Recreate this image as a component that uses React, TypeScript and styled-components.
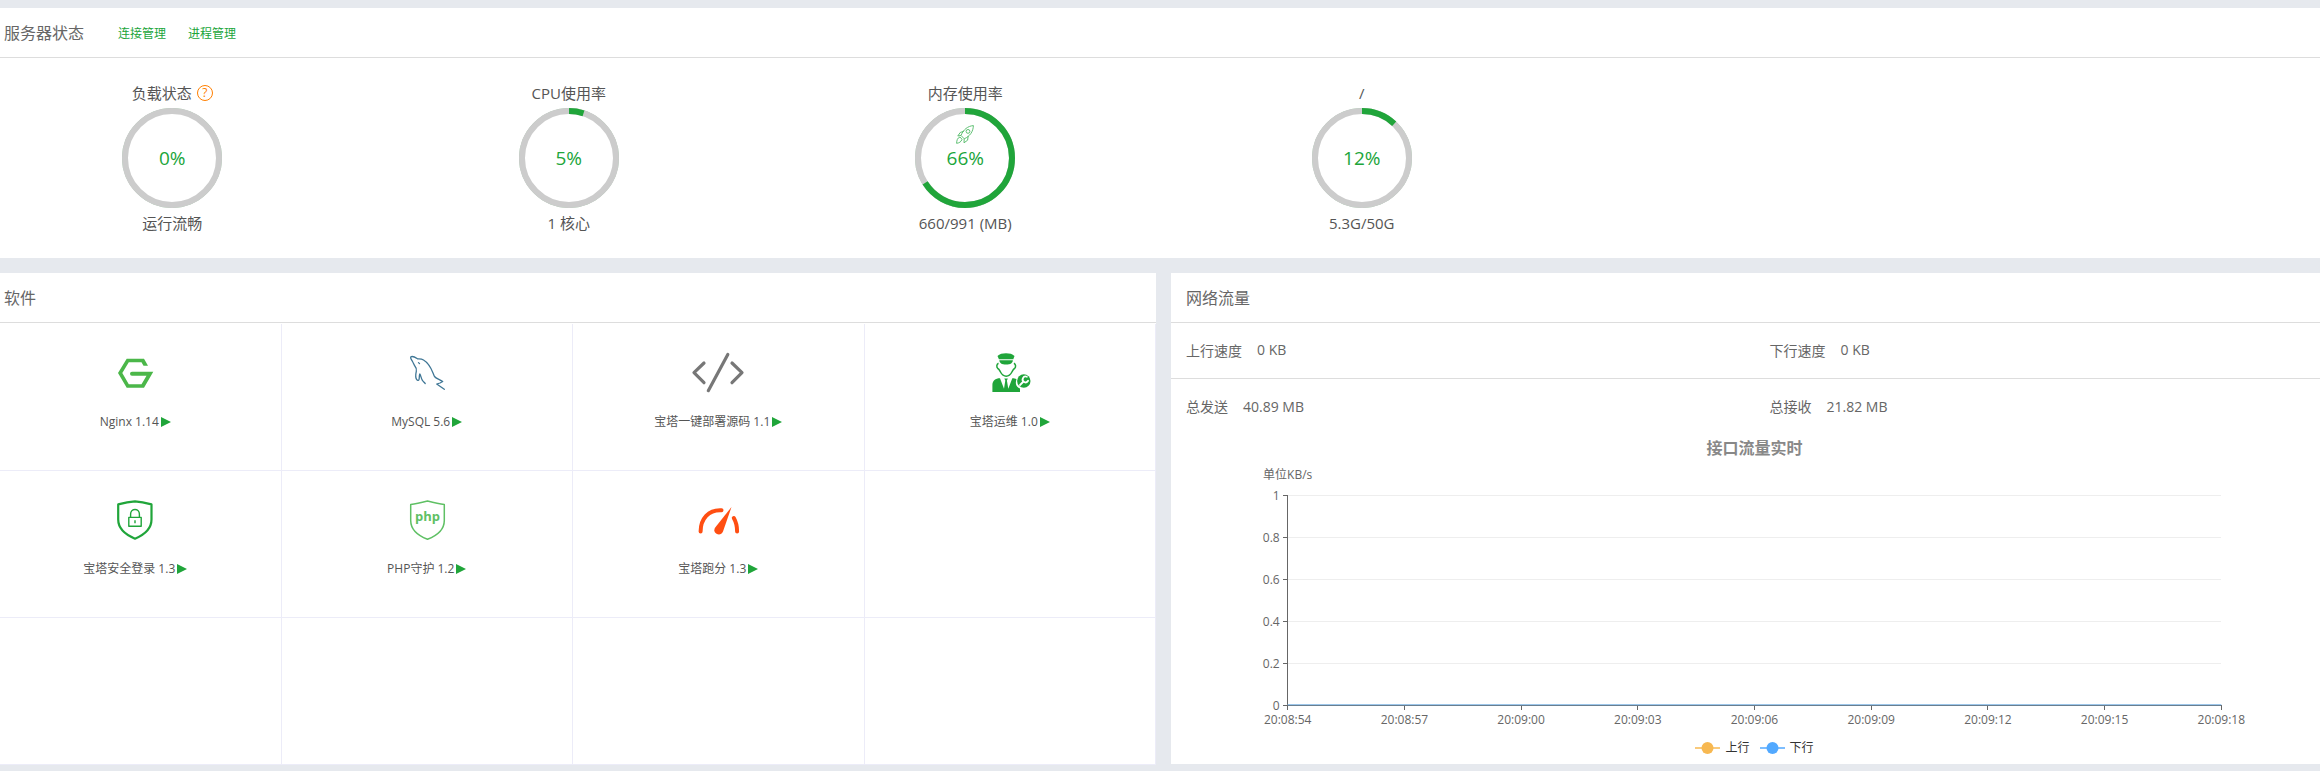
import React from 'react';
import styled, { createGlobalStyle } from 'styled-components';

const GREEN = '#20a53a';

const GlobalStyle = createGlobalStyle`
  *, *::before, *::after { box-sizing: border-box; }
  body {
    margin: 0;
    background: #e6e9ee;
    color: #555;
    font-family: "Open Sans", "Noto Sans CJK SC", sans-serif;
    font-size: 12px;
  }
`;

const Viewport = styled.div`
  overflow: hidden;
`;

const Page = styled.main`
  display: flex;
  flex-direction: column;
  gap: 15px;
  margin: 0 -18px 0 -11px;
  padding: 8px 0 6px;
`;

const Panel = styled.section`
  background: #fff;
  min-width: 0;
`;

const PanelHeader = styled.header`
  display: flex;
  align-items: center;
  gap: 22px;
  height: 50px;
  padding: 0 15px;
  border-bottom: 1px solid #ddd;
`;

const PanelTitle = styled.h2`
  margin: 0 12px 0 0;
  color: #666;
  font-size: 16px;
  font-weight: 400;
  line-height: 24px;
`;

const HeaderLink = styled.a`
  padding-top: 2px;
  color: ${GREEN};
  line-height: 20px;
  text-decoration: none;
`;

const Gauges = styled.div`
  display: grid;
  grid-template-columns: repeat(6, 1fr);
  margin: 0 -15px;
  padding: 25px 0;
`;

const Gauge = styled.div`
  display: flex;
  flex-direction: column;
  align-items: center;
  gap: 5px;
  font-size: 15px;
  line-height: 20px;
`;

const GaugeLabel = styled.div`
  display: flex;
  align-items: center;
  gap: 5px;
  height: 20px;
`;

const GaugeDial = styled.div`
  display: grid;
  place-items: center;
  width: 100px;
  height: 100px;
  > * { grid-area: 1 / 1; }
`;

const GaugeValue = styled.span`
  color: ${GREEN};
  font-size: 19px;
  line-height: 24px;
`;

const RocketSlot = styled.span`
  display: flex;
  align-self: start;
  padding-top: 17px;
`;

const HelpButton = styled.button`
  display: flex;
  align-items: center;
  justify-content: center;
  width: 16px;
  height: 16px;
  padding: 0;
  border: 1px solid #ff7f00;
  border-radius: 50%;
  background: none;
  color: #ff7f00;
  font: 12px/14px "Open Sans", sans-serif;
`;

const Columns = styled.div`
  display: grid;
  grid-template-columns: 1fr 1fr;
  gap: 15px;
  align-items: start;
`;

const SoftGrid = styled.ul`
  display: grid;
  grid-template-columns: repeat(4, 1fr);
  grid-auto-rows: 147px;
  margin: 0;
  padding: 1px 0 0 1px;
  list-style: none;
`;

const SoftCell = styled.li`
  display: flex;
  flex-direction: column;
  align-items: center;
  gap: 19px;
  padding-top: 29px;
  border-right: 1px solid #ececf8;
  border-bottom: 1px solid #ececf8;
`;

const SoftIcon = styled.svg`
  width: 40px;
  height: 40px;
  overflow: visible;
`;

const SoftName = styled.span`
  display: flex;
  align-items: center;
  gap: 2px;
  line-height: 20px;
`;

const NetRow = styled.dl<{ $divided?: boolean }>`
  display: grid;
  grid-template-columns: 1fr 1fr;
  height: 56px;
  margin: 0;
  border-bottom: ${(p) => (p.$divided ? '1px solid #ddd' : 'none')};
`;

const NetItem = styled.div`
  display: flex;
  align-items: center;
  gap: 15px;
  padding: 0 15px 2px;
  color: #666;
  font-size: 14px;
  dt, dd { margin: 0; }
`;

const Chart = styled.figure`
  display: flex;
  flex-direction: column;
  margin: 0;
  padding-bottom: 6px;
`;

const ChartTitle = styled.figcaption`
  color: #888;
  font-size: 16px;
  font-weight: 700;
  line-height: 27px;
  text-align: center;
`;

const Plot = styled.svg`
  display: block;
  width: 100%;
  height: 275px;
  font-size: 12px;
  fill: #666;
`;

const Legend = styled.div`
  display: flex;
  justify-content: center;
  gap: 10px;
  color: #333;
  line-height: 21px;
`;

const LegendItem = styled.span`
  display: flex;
  align-items: center;
  gap: 5px;
`;

const ring = (percent: number) => {
  const c = 2 * Math.PI * 47;
  return `${(c * percent) / 100} ${c}`;
};

function Dial({ percent, rocket }: { percent: number; rocket?: boolean }) {
  return (
    <GaugeDial>
      <svg width="100" height="100" viewBox="0 0 100 100" fill="none" strokeWidth="6" aria-hidden="true">
        <circle cx="50" cy="50" r="49.6" stroke="#9fcfa8" strokeWidth="1" />
        <circle cx="50" cy="50" r="47" stroke="#ccc" />
        {percent > 0 && (
          <circle cx="50" cy="50" r="47" stroke={GREEN} strokeDasharray={ring(percent)} transform="rotate(-90 50 50)" />
        )}
      </svg>
      {rocket && (
        <RocketSlot>
          <svg width="18" height="19" viewBox="0 0 18 19" fill="none" stroke="#5fc073" strokeWidth="1" strokeLinejoin="round" aria-hidden="true">
            <path d="M17.4.6C11.8 1 7.4 4.6 5 10.4l3.2 3.4C14 11.3 17.2 6.500 17.4.6z" />
            <circle cx="12" cy="6.400" r="1.900" />
            <path d="M8 6.200 4.200 7.500 1.800 11 5 10.400M12.200 10.800l-.6 4.400L8 17.800l.2-4" />
            <path d="M4 12C1.400 12.800.7 15.500.6 18.300 3 18 5.200 17 6 14.300L4 12z" />
          </svg>
        </RocketSlot>
      )}
      <GaugeValue>{percent}%</GaugeValue>
    </GaugeDial>
  );
}

const nginx = (
  <path
    fill="#4bb749"
    d="M3 20 11.700 5.700H29l4 7.100h-4.500l-2-3.500H13.800L7.300 20l6.500 11.200h12.700l5-8.500H17a2 2 0 0 1 0-4h21.300L29 34.700H11.700z"
  />
);

const mysql = (
  <g fill="none" stroke="#3f7695" strokeWidth="1.300" strokeLinecap="round" strokeLinejoin="round">
    <path d="M37.300 36.300 29.700 31l3.300-1 2.700-1.500C33 26.500 29 25.500 27.500 23.500 25 18 23.500 11 16.500 7 14 5.500 11.500 6.200 10.500 5.800 8.500 4.500 5.500 2.800 4 3.800 2.800 4.900 4.500 7 5.500 8.500 6.500 10.300 7 12 8 13.300c1.500 1.700 1.800 3 1.300 5-.7 3-.9 6.500.5 8.400.7 1 1.800.7 2.200-.3.500-1.400 0-3.600.8-5.400 1.200 1.500 1.200 4.500 2.700 6.500.8 1.200 1.800 2 2.700 3" />
    <path d="M11.500 9.600l1 1" />
  </g>
);

const code = (
  <g fill="none" stroke="#777" strokeWidth="3.200" strokeLinecap="round" strokeLinejoin="round">
    <path d="M6 10-4 19.700 6 29.700M34 10l10 9.700-10 10M29.800 1.500 10.300 37.700" />
  </g>
);

const ops = (
  <g fill={GREEN}>
    <path d="M7.500 3C9.500.9 12.500.3 16 .3s6.500.6 8.500 2.700L23.300 6.300H8.900z" />
    <path d="M9.300 7.300h13.600c-.2 2.700-2.300 4.300-6.800 4.300S9.500 10 9.300 7.300z" />
    <path
      fill="none"
      stroke={GREEN}
      strokeWidth="1.500"
      d="M8.500 10.200C6.500 11 6.300 14 7.800 15.500c1.400.6 1.800 1.900 2.700 3.500 1.200 2.300 3.100 4.200 5.700 4.200s4.500-1.900 5.700-4.200c.9-1.600 1.300-2.900 2.700-3.500 1.500-1.500 1.300-4.500-.7-5.300"
    />
    <path d="M2.400 39V32c0-4 3-6.700 7.600-6.700l4 10.400 1.300-8.300-1-2h3.600l-1 2 1.400 8.300 4-10.400c1.700 0 3 .3 4.200 1-1.500 4.200-.5 7.600 3.500 9.200V39z" />
    <circle cx="33.800" cy="28" r="6.700" />
    <path fill="none" stroke="#fff" strokeWidth="1.800" strokeLinecap="round" d="M30 32l3-3M36.800 23.800a2.900 2.900 0 1 0 1.300 4" />
  </g>
);

const login = (
  <g fill="none" stroke={GREEN} strokeLinejoin="round">
    <path strokeWidth="2.200" d="M20 1.400c6 .3 11.500 1.600 16.500 3v15.200C36.500 29 29 35 20 38.700 11 35 3.200 29 3.200 19.600V4.400c5-1.400 10.800-2.700 16.800-3z" />
    <path strokeWidth="1.400" d="M13.800 17.400h12.400v8.900H13.800zM15.600 17.400V14c0-2.600 2-4.500 4.400-4.500s4.400 1.900 4.400 4.500v3.400M20 20.200v3" />
  </g>
);

const php = (
  <g>
    <path
      fill="none"
      stroke="#5fc064"
      strokeWidth="1.500"
      strokeLinejoin="round"
      d="M20.500 1C26 2.500 32 4 37.300 4.400v16C37.300 29 30 35.500 20.500 39.200 11 35.500 3.700 29 3.700 20.400v-16C9 4 15 2.500 20.500 1z"
    />
    <text x="20.500" y="21" textAnchor="middle" fontSize="13" fontWeight="700" fill="#5fc064">php</text>
  </g>
);

const score = (
  <g fill="none" stroke="#ff4e12" strokeWidth="4" strokeLinecap="round">
    <path d="M2.600 31.500C2.600 19 10.500 9.500 23.500 10.200" />
    <path d="M35.800 18c2.600 4.500 3.300 8.500 3.300 13.500" />
    <path fill="#ff4e12" stroke="none" d="M33.500 7 25 31.600c-1.200 3-4.300 3.500-6.500 2.200s-2.800-3.700-1.500-6z" />
  </g>
);

const software: { name: string; icon: React.ReactNode }[] = [
  { name: 'Nginx 1.14', icon: nginx },
  { name: 'MySQL 5.6', icon: mysql },
  { name: '宝塔一键部署源码 1.1', icon: code },
  { name: '宝塔运维 1.0', icon: ops },
  { name: '宝塔安全登录 1.3', icon: login },
  { name: 'PHP守护 1.2', icon: php },
  { name: '宝塔跑分 1.3', icon: score },
];

const CELL_COUNT = 12;

const times = ['20:08:54', '20:08:57', '20:09:00', '20:09:03', '20:09:06', '20:09:09', '20:09:12', '20:09:15', '20:09:18'];
const levels = ['1', '0.8', '0.6', '0.4', '0.2', '0'];

function TrafficPlot() {
  return (
    <Plot role="img" aria-label="接口流量实时">
      <svg x="10%" y="33" width="80%" height="210" overflow="visible">
        <text x="0" y="-16" textAnchor="middle">单位KB/s</text>
        {levels.map((level, i) => (
          <g key={level}>
            {i < 5 && <line x1="0" x2="100%" y1={i * 42} y2={i * 42} stroke="#eee" shapeRendering="crispEdges" />}
            <line x1="-5" x2="0" y1={i * 42} y2={i * 42} stroke="#666" shapeRendering="crispEdges" />
            <text x="-8" y={i * 42 + 5} textAnchor="end">{level}</text>
          </g>
        ))}
        {times.map((time, i) => (
          <g key={time}>
            <line x1={`${i * 12.5}%`} x2={`${i * 12.5}%`} y1="210" y2="215" stroke="#666" shapeRendering="crispEdges" />
            <text x={`${i * 12.5}%`} y="229" textAnchor="middle">{time}</text>
          </g>
        ))}
        <line x1="0" x2="0" y1="0" y2="210" stroke="#666" shapeRendering="crispEdges" />
        <rect x="0" y="209" width="100%" height="1" fill="#9cc6ea" />
        <rect x="0" y="210" width="100%" height="1" fill="#6a7f90" />
      </svg>
    </Plot>
  );
}

function LegendMark({ color }: { color: string }) {
  return (
    <svg width="25" height="14" viewBox="0 0 25 14" aria-hidden="true">
      <line x1="0" x2="25" y1="7" y2="7" stroke={color} strokeWidth="1.500" />
      <circle cx="12.500" cy="7" r="6" fill={color} />
    </svg>
  );
}

export default function App() {
  return (
    <Viewport>
      <GlobalStyle />
      <Page>
        <Panel>
          <PanelHeader>
            <PanelTitle>服务器状态</PanelTitle>
            <HeaderLink href="#connections">连接管理</HeaderLink>
            <HeaderLink href="#processes">进程管理</HeaderLink>
          </PanelHeader>
          <Gauges>
            <Gauge>
              <GaugeLabel>
                负载状态
                <HelpButton type="button">?</HelpButton>
              </GaugeLabel>
              <Dial percent={0} />
              <span>运行流畅</span>
            </Gauge>
            <Gauge>
              <GaugeLabel>CPU使用率</GaugeLabel>
              <Dial percent={5} />
              <span>1 核心</span>
            </Gauge>
            <Gauge>
              <GaugeLabel>内存使用率</GaugeLabel>
              <Dial percent={66} rocket />
              <span>660/991 (MB)</span>
            </Gauge>
            <Gauge>
              <GaugeLabel>/</GaugeLabel>
              <Dial percent={12} />
              <span>5.3G/50G</span>
            </Gauge>
          </Gauges>
        </Panel>

        <Columns>
          <Panel>
            <PanelHeader>
              <PanelTitle>软件</PanelTitle>
            </PanelHeader>
            <SoftGrid>
              {Array.from({ length: CELL_COUNT }, (_, i) => {
                const item = software[i];
                return (
                  <SoftCell key={i}>
                    {item && (
                      <>
                        <SoftIcon viewBox="0 0 40 40" aria-hidden="true">{item.icon}</SoftIcon>
                        <SoftName>
                          {item.name}
                          <svg width="10" height="10" viewBox="0 0 10 10" aria-hidden="true">
                            <path d="M0 0l10 5-10 5z" fill={GREEN} />
                          </svg>
                        </SoftName>
                      </>
                    )}
                  </SoftCell>
                );
              })}
            </SoftGrid>
          </Panel>

          <Panel>
            <PanelHeader>
              <PanelTitle>网络流量</PanelTitle>
            </PanelHeader>
            <NetRow $divided>
              <NetItem><dt>上行速度</dt><dd>0 KB</dd></NetItem>
              <NetItem><dt>下行速度</dt><dd>0 KB</dd></NetItem>
            </NetRow>
            <NetRow>
              <NetItem><dt>总发送</dt><dd>40.89 MB</dd></NetItem>
              <NetItem><dt>总接收</dt><dd>21.82 MB</dd></NetItem>
            </NetRow>
            <Chart>
              <ChartTitle>接口流量实时</ChartTitle>
              <TrafficPlot />
              <Legend>
                <LegendItem><LegendMark color="#f7b851" />上行</LegendItem>
                <LegendItem><LegendMark color="#52a9ff" />下行</LegendItem>
              </Legend>
            </Chart>
          </Panel>
        </Columns>
      </Page>
    </Viewport>
  );
}
